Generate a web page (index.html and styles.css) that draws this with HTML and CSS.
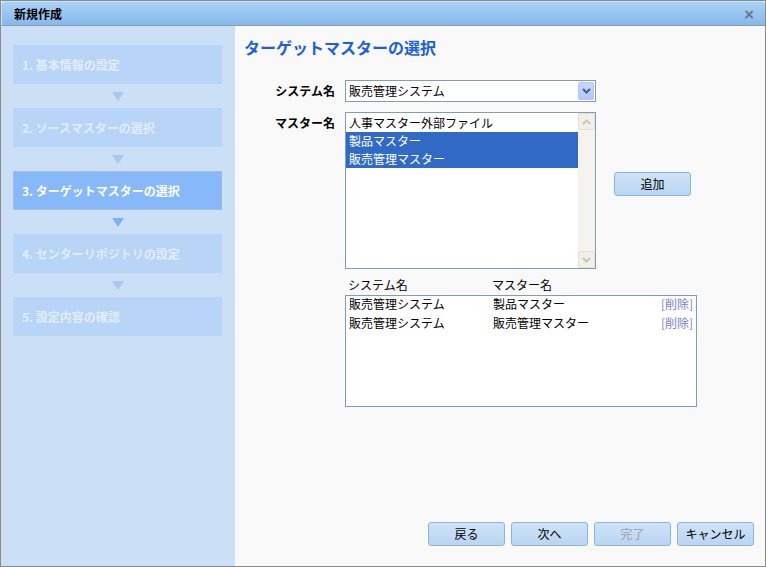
FILE: index.html
```html
<!DOCTYPE html>
<html lang="ja">
<head>
<meta charset="utf-8">
<title>新規作成</title>
<link rel="stylesheet" href="styles.css">
</head>
<body>
<div class="window">
  <div class="titlebar">
    <span class="title">新規作成</span>
    <span class="close">×</span>
  </div>
  <div class="body">
    <div class="steps">
      <div class="step">1. 基本情報の設定</div>
      <div class="arrow"></div>
      <div class="step">2. ソースマスターの選択</div>
      <div class="arrow"></div>
      <div class="step active">3. ターゲットマスターの選択</div>
      <div class="arrow next"></div>
      <div class="step">4. センターリポジトリの設定</div>
      <div class="arrow"></div>
      <div class="step">5. 設定内容の確認</div>
    </div>
    <div class="main">
      <h1 class="heading">ターゲットマスターの選択</h1>
      <div class="form">
        <div class="label">システム名</div>
        <div class="select">
          <span class="select-text">販売管理システム</span>
          <span class="select-btn">
            <svg width="9" height="6" viewBox="0 0 9 6"><path d="M1 1 L4.5 4.5 L8 1" fill="none" stroke="#4a5d82" stroke-width="2"/></svg>
          </span>
        </div>
        <div class="label">マスター名</div>
        <div class="list-row">
          <div class="listbox">
            <div class="items">
              <div class="item">人事マスター外部ファイル</div>
              <div class="item sel">製品マスター</div>
              <div class="item sel">販売管理マスター</div>
            </div>
            <div class="scrollbar">
              <span class="sb-btn"><svg width="9" height="6" viewBox="0 0 9 6"><path d="M1 5 L4.5 1.5 L8 5" fill="none" stroke="#c9c7ba" stroke-width="2"/></svg></span>
              <span class="sb-btn"><svg width="9" height="6" viewBox="0 0 9 6"><path d="M1 1 L4.5 4.5 L8 1" fill="none" stroke="#c9c7ba" stroke-width="2"/></svg></span>
            </div>
          </div>
          <button class="btn add">追加</button>
        </div>
      </div>
      <div class="table-wrap">
        <div class="thead">
          <span class="c1">システム名</span>
          <span class="c2">マスター名</span>
        </div>
        <div class="tbox">
          <div class="trow"><span class="c1">販売管理システム</span><span class="c2">製品マスター</span><span class="del">[削除]</span></div>
          <div class="trow"><span class="c1">販売管理システム</span><span class="c2">販売管理マスター</span><span class="del">[削除]</span></div>
        </div>
      </div>
      <div class="footer">
        <button class="btn">戻る</button>
        <button class="btn">次へ</button>
        <button class="btn disabled">完了</button>
        <button class="btn">キャンセル</button>
      </div>
    </div>
  </div>
</div>
</body>
</html>
```
FILE: styles.css
```css
* { box-sizing: border-box; }
html, body { margin: 0; padding: 0; }
body {
  font-family: "Noto Sans CJK JP", "Noto Sans", sans-serif;
  font-size: 12px;
  color: #000;
  background: #fff;
}
.window {
  width: 766px;
  height: 567px;
  border: 1px solid #8a8a8a;
  display: flex;
  flex-direction: column;
  overflow: hidden;
}
.titlebar {
  height: 25px;
  flex: none;
  background: linear-gradient(#abd1f5, #84b9ec);
  border-bottom: 1px solid #8f9aa6;
  border-top: 1px solid #c8e0f8;
  border-left: 1px solid #c8e0f8;
  border-radius: 3px 3px 0 0;
  display: flex;
  align-items: center;
  justify-content: space-between;
  padding: 0 10px 0 12px;
}
.title {
  font-weight: bold;
  font-size: 12px;
  line-height: 14px;
  color: #000;
}
.close {
  font-family: "DejaVu Sans", sans-serif;
  font-size: 14px;
  line-height: 14px;
  color: #6b7280;
  font-weight: bold;
}
.body {
  flex: 1;
  display: flex;
  min-height: 0;
}
.steps {
  width: 234px;
  flex: none;
  background: #cbdff6;
  padding: 19px 0 0 12px;
  display: flex;
  flex-direction: column;
}
.step {
  width: 209px;
  height: 39px;
  background: #b8d4f6;
  color: #e2edfb;
  font-weight: bold;
  font-size: 12px;
  line-height: 14px;
  padding-left: 8px;
  display: flex;
  align-items: center;
  border: 1px solid #b8d4f6;
}
.step.active {
  background: #86b8fa;
  border-color: #a0bde2;
  color: #fff;
}
.arrow {
  height: 24px;
  width: 209px;
  display: flex;
  justify-content: center;
  align-items: center;
}
.arrow::before {
  content: "";
  border-left: 6px solid transparent;
  border-right: 6px solid transparent;
  border-top: 9px solid #a9c9f2;
}
.arrow.next::before {
  border-top-color: #7db0f4;
}
.main {
  flex: 1;
  background: #f9f9f9;
  display: flex;
  flex-direction: column;
  padding: 0 11px 20px 9px;
}
.heading {
  margin: 10px 0 0 0;
  font-size: 16px;
  line-height: 22px;
  font-weight: bold;
  color: #1b5fe0;
}
.form {
  margin-top: 22px;
  display: grid;
  grid-template-columns: 91px auto;
  column-gap: 10px;
  row-gap: 10px;
}
.label {
  text-align: right;
  font-weight: bold;
  line-height: 14px;
  padding-top: 4px;
}
.select {
  width: 251px;
  height: 22px;
  border: 1px solid #7f9db9;
  background: #fff;
  display: flex;
  align-items: center;
  justify-content: space-between;
  padding: 1px 1px 1px 3px;
}
.select-text { line-height: 14px; }
.select-btn {
  width: 16px;
  height: 18px;
  background: linear-gradient(#c6d7fb, #b3c8f7);
  border: 1px solid #b6c8f2;
  border-radius: 2px;
  display: flex;
  align-items: center;
  justify-content: center;
}
.list-row {
  display: flex;
  align-items: flex-start;
  gap: 18px;
}
.listbox {
  width: 251px;
  height: 157px;
  border: 1px solid #7f9db9;
  background: #fff;
  display: flex;
}
.items {
  flex: 1;
  padding-top: 1px;
}
.item {
  height: 18px;
  line-height: 18px;
  padding-left: 3px;
  white-space: nowrap;
}
.item.sel {
  background: #316ac5;
  color: #fff;
}
.scrollbar {
  width: 17px;
  flex: none;
  background: #f4f3ee;
  display: flex;
  flex-direction: column;
  justify-content: space-between;
}
.sb-btn {
  width: 17px;
  height: 17px;
  background: #f1efe6;
  border: 1px solid #e3e1d6;
  border-radius: 2px;
  display: flex;
  align-items: center;
  justify-content: center;
}
.btn {
  width: 77px;
  height: 24px;
  font-family: "Noto Sans CJK JP", "Noto Sans", sans-serif;
  font-size: 12px;
  line-height: 14px;
  color: #000;
  background: linear-gradient(#cfe3f7, #bad5f1);
  border: 1px solid #86b5e9;
  border-radius: 3px;
  padding: 0;
}
.btn.add { margin-top: 60px; }
.btn.disabled { color: #a0a0a0; }
.table-wrap {
  margin-top: 9px;
  margin-left: 101px;
}
.thead {
  display: flex;
  padding-left: 3px;
  line-height: 14px;
  height: 17px;
}
.c1 { width: 144px; flex: none; }
.c2 { flex: 1; }
.tbox {
  width: 352px;
  height: 112px;
  border: 1px solid #7f9db9;
  background: #fff;
  padding-top: 0;
}
.trow {
  display: flex;
  height: 19px;
  line-height: 16px;
  padding: 0 3px 0 3px;
}
.del {
  color: #7680d8;
}
.footer {
  margin-top: auto;
  display: flex;
  justify-content: flex-end;
  gap: 6px;
}
```
